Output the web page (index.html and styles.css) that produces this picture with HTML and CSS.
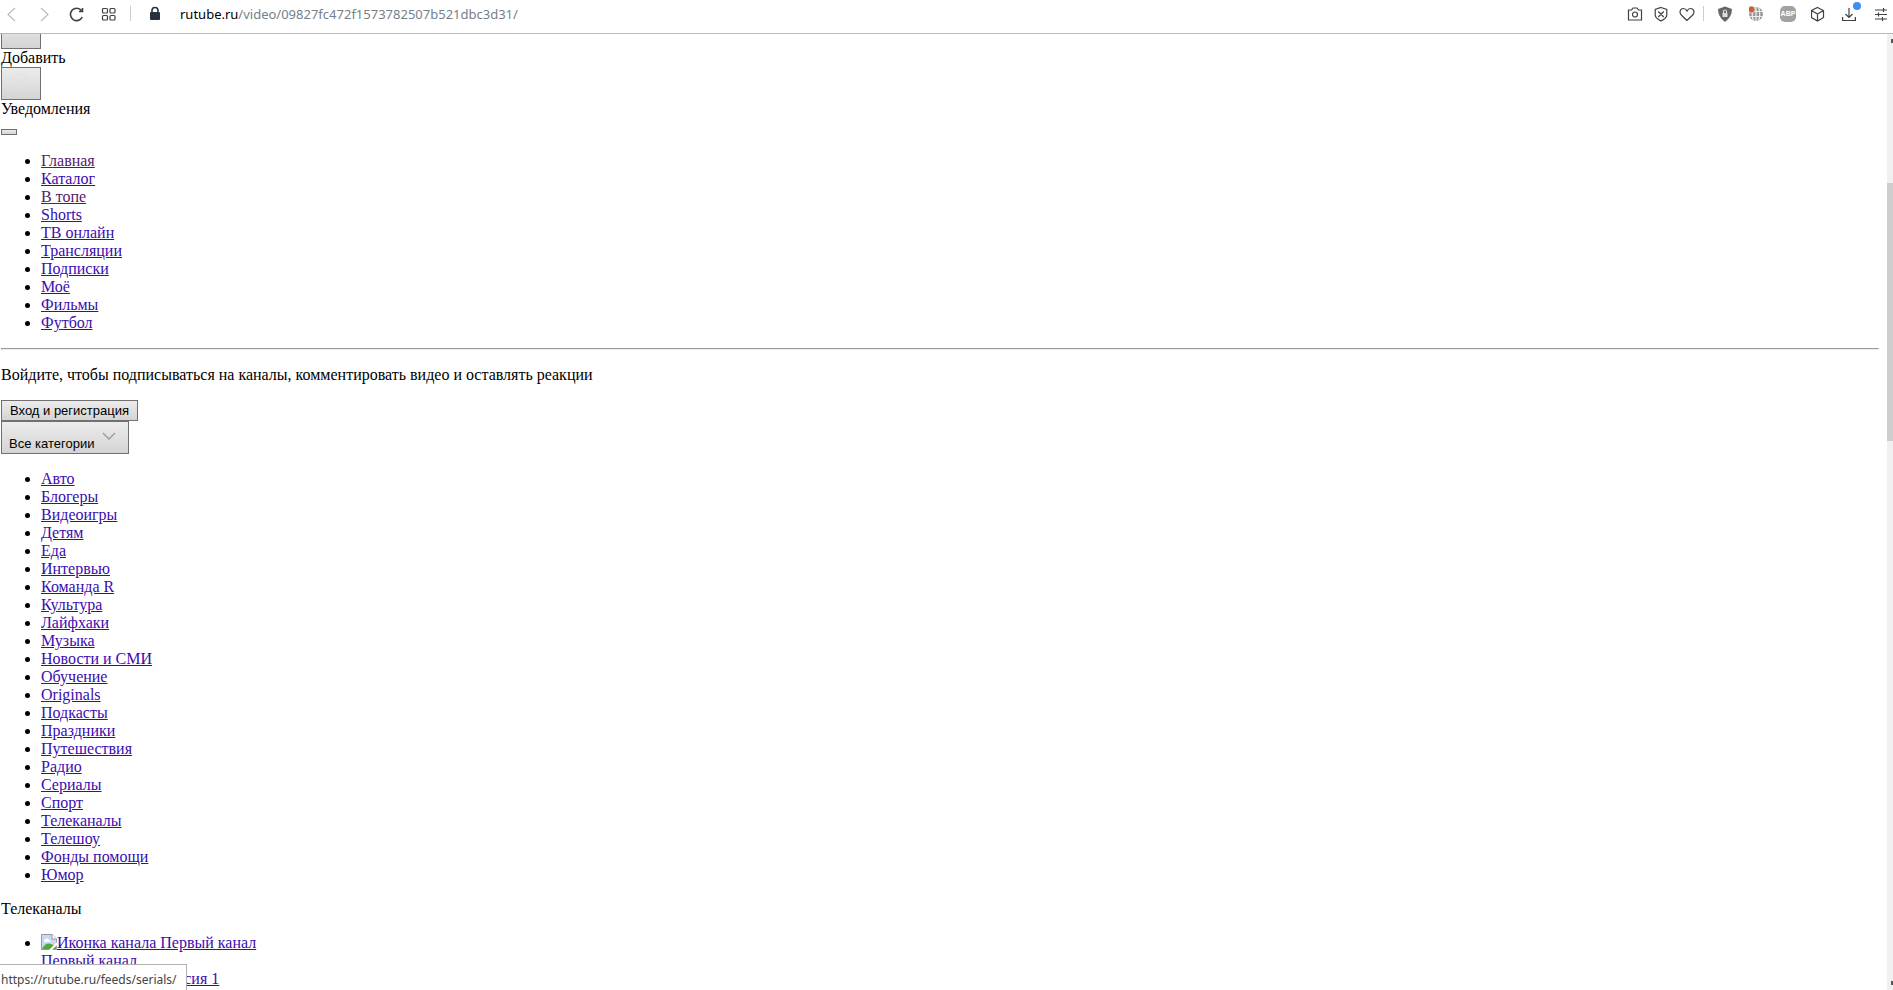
FILE: index.html
```
<!DOCTYPE html>
<html lang="ru">
<head>
  <meta charset="UTF-8">
  <meta name="viewport" content="width=device-width, initial-scale=1.0">
  <title>RUTUBE</title>
  <link rel="stylesheet" href="styles.css">
</head>
<body>

  <header class="toolbar">
    <div class="nav">
      <button class="tool off" aria-label="Назад"><svg width="16" height="16" viewBox="0 0 16 16"><path d="M11 2L4 8.500L11 15"/></svg></button>
      <button class="tool off" aria-label="Вперёд"><svg width="16" height="16" viewBox="0 0 16 16"><path d="M5 2L12 8.500L5 15"/></svg></button>
      <button class="tool reload" aria-label="Обновить"><svg width="16" height="16" viewBox="0 0 16 16"><path d="M14.300 11A6.200 6.200 0 1 1 13.500 4.500M14.500 2V5.500H11"/></svg></button>
      <button class="tool" aria-label="Экспресс-панель"><svg width="16" height="16" viewBox="0 0 16 16"><rect x="2.500" y="2.500" width="5" height="4.500" rx="1"/><rect x="10" y="2.500" width="5" height="4.500" rx="1"/><rect x="2.500" y="9.500" width="5" height="4.500" rx="1"/><rect x="10" y="9.500" width="5" height="4.500" rx="1"/></svg></button>
    </div>
    <span class="sep"></span>
    <svg class="lock" width="12" height="16" viewBox="0 0 12 16"><rect x="1" y="6" width="10" height="8" rx="1" fill="#28323c"/><path d="M3 6V4.500a3 3 0 0 1 6 0V6" fill="none" stroke="#28323c" stroke-width="1.600"/></svg>
    <div class="url"><span class="host">rutube.ru</span>/video/09827fc472f1573782507b521dbc3d31/</div>
    <div class="actions">
      <button class="tool" aria-label="Снимок"><svg width="16" height="16" viewBox="0 0 16 16"><path d="M1.500 4H4.500L6 2H10L11.500 4H14.500V14H1.500Z"/><circle cx="8" cy="8.500" r="2.500"/></svg></button>
      <button class="tool" aria-label="Блокировка"><svg width="16" height="16" viewBox="0 0 16 16"><path d="M8 1.500L13.800 3.500V9Q13.800 12 8 15Q2.200 12 2.200 9V3.500ZM5.300 5.500L10.700 11M10.700 5.500L5.300 11"/></svg></button>
      <button class="tool" aria-label="В закладки"><svg width="16" height="16" viewBox="0 0 16 16"><path d="M8 14.500L2.300 9C0 6.500 1 2.500 4.300 2.500Q6.800 2.500 8 5Q9.200 2.500 11.700 2.500C15 2.500 16 6.500 13.700 9Z"/></svg></button>
    </div>
    <span class="sep narrow"></span>
    <div class="extensions">
      <button class="tool" aria-label="Защита"><svg width="16" height="16" viewBox="0 0 16 16"><path d="M7 .5L14 3Q14 11 7 16Q0 11 0 3Z" fill="#666" stroke="none"/><rect x="4.500" y="7" width="5" height="4" fill="#ddd" stroke="none"/><path d="M5.500 7V5.500a1.500 1.500 0 0 1 3 0V7" stroke="#ddd"/></svg></button>
      <button class="tool" aria-label="Переводчик"><svg width="16" height="16" viewBox="0 0 16 16"><circle cx="7" cy="8" r="7" fill="#999" stroke="none"/><path d="M0 5.500H14M0 10.500H14M7 1V15M4.500 1Q2 8 4.500 15M9.500 1Q12 8 9.500 15" stroke="#eee"/><circle cx="2.500" cy="3.500" r="3.500" fill="#c8603a" stroke="#fff" stroke-width=".6"/></svg></button>
      <button class="tool abp" aria-label="Adblock Plus">ABP</button>
      <button class="tool" aria-label="Расширения"><svg width="16" height="16" viewBox="0 0 16 16"><path d="M6.500 1.500L12.500 4.500V11.500L6.500 15L.5 11.500V4.500ZM.5 4.500L6.500 8L12.500 4.500M6.500 8V15"/></svg></button>
      <button class="tool downloads" aria-label="Загрузки"><svg width="16" height="16" viewBox="0 0 16 16"><path d="M7 2V11M3.500 8L7 11.500L10.500 8M.6 11V14.500H13.400V11"/></svg><span class="dot"></span></button>
      <button class="tool" aria-label="Настройки"><svg width="16" height="16" viewBox="0 0 16 16"><path d="M2 4H14M2 8.500H14M2 13H14M10.500 2V6M5.500 6.500V10.500M9.500 11V15"/></svg></button>
    </div>
  </header>

  <div class="viewport">
    <main class="page">
      <button class="icon-btn cut" aria-label="Добавить"><svg width="24" height="24" viewBox="0 0 24 24"><path d="M5 8V14Q5 16 8 16H16Q19 16 19 14V8"/></svg></button>
      <div>Добавить</div>
      <button class="icon-btn" aria-label="Уведомления"><svg width="24" height="24" viewBox="0 0 24 24"><path d="M5 15H19M7 15V9a5 5 0 0 1 10 0V15M9 16a3 3 0 0 0 6 0"/></svg></button>
      <div>Уведомления</div>
      <button class="menu-btn" aria-label="Меню"></button>

      <ul>
        <li><a class="visited" href="#">Главная</a></li>
        <li><a href="#">Каталог</a></li>
        <li><a class="visited" href="#">В топе</a></li>
        <li><a href="#">Shorts</a></li>
        <li><a href="#">ТВ онлайн</a></li>
        <li><a href="#">Трансляции</a></li>
        <li><a href="#">Подписки</a></li>
        <li><a href="#">Моё</a></li>
        <li><a href="#">Фильмы</a></li>
        <li><a href="#">Футбол</a></li>
      </ul>
      <hr>
      <p>Войдите, чтобы подписываться на каналы, комментировать видео и оставлять реакции</p>
      <button class="text-btn">Вход и регистрация</button>
      <button class="text-btn categories">Все категории <svg width="24" height="24" viewBox="0 0 24 24"><path d="M5 9L11 15L17 9"/></svg></button>

      <ul>
        <li><a href="#">Авто</a></li>
        <li><a href="#">Блогеры</a></li>
        <li><a href="#">Видеоигры</a></li>
        <li><a href="#">Детям</a></li>
        <li><a href="#">Еда</a></li>
        <li><a href="#">Интервью</a></li>
        <li><a href="#">Команда R</a></li>
        <li><a href="#">Культура</a></li>
        <li><a href="#">Лайфхаки</a></li>
        <li><a href="#">Музыка</a></li>
        <li><a href="#">Новости и СМИ</a></li>
        <li><a href="#">Обучение</a></li>
        <li><a href="#">Originals</a></li>
        <li><a href="#">Подкасты</a></li>
        <li><a href="#">Праздники</a></li>
        <li><a href="#">Путешествия</a></li>
        <li><a href="#">Радио</a></li>
        <li><a href="#">Сериалы</a></li>
        <li><a href="#">Спорт</a></li>
        <li><a href="#">Телеканалы</a></li>
        <li><a href="#">Телешоу</a></li>
        <li><a href="#">Фонды помощи</a></li>
        <li><a href="#">Юмор</a></li>
      </ul>
      <p>Телеканалы</p>
      <ul>
        <li><a href="#"><svg class="broken" width="16" height="16" viewBox="0 0 16 16"><path d="M.5 15.500V.5H11L15.500 5V15.500Z" fill="#c6d8f4" stroke="#999"/><path d="M11 .5V5H15.500" fill="#fff" stroke="#999"/><path d="M3 7Q3 5 5 5Q7 3 8 6Q10 6 9 8H3Z" fill="#fff"/><path d="M1 15Q5 8 10 10L15 12V15Z" fill="#54a73c"/><path d="M8 16L16 8V11L11 16Z" fill="#fff"/></svg>Иконка канала Первый канал<br>Первый канал</a></li>
        <li><a href="#"><svg class="broken" width="16" height="16" viewBox="0 0 16 16"><path d="M.5 15.500V.5H11L15.500 5V15.500Z" fill="#c6d8f4" stroke="#999"/></svg>Иконка канала Россия 1</a></li>
      </ul>
    </main>
    <div class="scrollbar"><span class="arrow up"></span><span class="thumb"></span><span class="arrow down"></span></div>
  </div>

  <div class="status">https://rutube.ru/feeds/serials/</div>

</body>
</html>
```
FILE: styles.css
```
body {
  margin: 0;
  height: 100vh;
  display: flex;
  flex-direction: column;
  overflow: hidden;
  background: #fff;
  color: #000;
  font: 16px/18px "Liberation Serif", "Times New Roman", serif;
}

/* browser toolbar */
.toolbar {
  display: flex;
  align-items: center;
  flex: none;
  height: 34px;
  padding: 0 4px 6px;
  box-sizing: border-box;
  border-bottom: 1px solid #b9bac0;
  font-family: "Noto Sans", "Open Sans", sans-serif;
}
.nav {
  display: flex;
  gap: 16px;
}
.tool {
  position: relative;
  display: flex;
  width: 16px;
  height: 16px;
  padding: 0;
  border: none;
  background: none;
}
.tool svg {
  fill: none;
  stroke: #3c4248;
  stroke-width: 1.2;
}
.tool.off svg {
  stroke: #bbb;
}
.tool.reload svg {
  stroke-width: 1.6;
}
.sep {
  width: 1px;
  height: 15px;
  margin: 0 14px;
  background: #ccc;
}
.sep.narrow {
  margin-left: 8px;
}
.lock {
  margin: 0 19px 0 4px;
}
.url {
  flex: 1;
  font-size: 13px;
  color: #76808a;
}
.host {
  color: #000;
}
.actions {
  display: flex;
  gap: 10px;
}
.extensions {
  display: flex;
  gap: 15px;
}
.tool.abp {
  align-items: center;
  justify-content: center;
  background: #a2a2a2;
  border-radius: 5px;
  color: #fff;
  font: bold 7px "Liberation Sans", Arial, sans-serif;
}
.dot {
  position: absolute;
  top: -4px;
  right: -3px;
  width: 8px;
  height: 8px;
  border-radius: 50%;
  background: #3f8cf4;
}

/* page */
.viewport {
  flex: 1;
  display: flex;
  min-height: 0;
}
.page {
  flex: 1;
  display: flex;
  flex-direction: column;
  align-items: flex-start;
  overflow: hidden;
  padding: 0 8px 0 1px;
}
.page > * {
  flex: none;
}
.page button {
  border: 1px solid #707070;
  background: linear-gradient(#ececec, #d4d4d4);
  color: #000;
  font: 13px/15px "Liberation Sans", Arial, sans-serif;
}
.icon-btn {
  width: 40px;
  height: 33px;
  padding: 0;
}
.icon-btn.cut {
  margin-top: -18px;
}
.icon-btn svg {
  fill: none;
  stroke: #dfe0ea;
}
.page .menu-btn {
  width: 16px;
  height: 6px;
  margin: 11px 0 1px;
  padding: 0;
}
.text-btn {
  padding: 2px 8px;
}
.categories {
  height: 33px;
  padding: 2px 6px 2px 7px;
}
.categories svg {
  fill: none;
  stroke: #9499a8;
  stroke-width: 1.3;
}
ul {
  margin: 16px 0;
  padding-left: 40px;
}
p {
  margin: 16px 0;
}
ul + p,
p + ul {
  margin-top: 0;
}
hr {
  box-sizing: border-box;
  width: 100%;
  margin: 0;
  border: 1px solid #999;
  border-bottom-color: #eee;
  border-right-color: #eee;
}
a {
  color: #3a0cb0;
}
a.visited {
  color: #551a6b;
}
.broken {
  vertical-align: top;
}

.scrollbar {
  width: 6px;
  display: flex;
  flex-direction: column;
  background: #f0f0f0;
}
.thumb {
  height: 27%;
  margin-top: 135px;
  background: #cdcdcd;
}
.arrow {
  align-self: flex-end;
  width: 2px;
  height: 4px;
  margin: 5px 0;
  background: #555;
}
.arrow.down {
  margin-top: auto;
}

/* link preview in the corner */
.status {
  position: absolute;
  left: 0;
  bottom: 0;
  box-sizing: border-box;
  width: 187px;
  height: 26px;
  padding: 6px 1px;
  border: 1px solid #b0b0b0;
  border-width: 1px 1px 0 0;
  background: #fff;
  color: #444;
  font: 12px/18px "Noto Sans", "Open Sans", sans-serif;
}
```
